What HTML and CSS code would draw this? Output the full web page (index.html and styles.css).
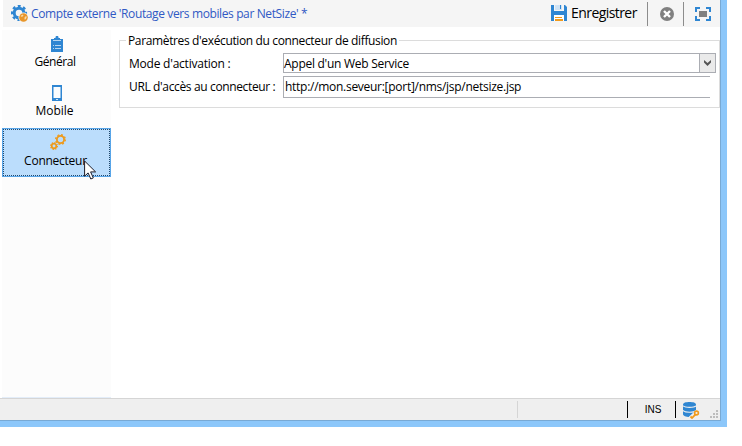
FILE: index.html
```html
<!DOCTYPE html>
<html lang="fr">
<head>
<meta charset="utf-8">
<title>Compte externe</title>
<link rel="stylesheet" href="styles.css">
</head>
<body>
<div class="window">
  <header class="toolbar">
    <svg class="gear" width="18" height="18" viewBox="0 0 18 18">
      <circle cx="8" cy="8" r="4.8" fill="none" stroke="#2f86d2" stroke-width="3"/>
      <circle cx="8" cy="8" r="6.8" fill="none" stroke="#2f86d2" stroke-width="2.6" stroke-dasharray="2.8 2.54" stroke-dashoffset="1.4"/>
      <circle cx="12.5" cy="12.5" r="5" fill="#f5f5f5"/>
      <circle cx="12.5" cy="12.5" r="4.3" fill="#e8962a"/>
      <path d="M9.500 11l2-1.500 1 1-1.500 1.500zM13.500 12.500l1.500-1.500.8 1-1 2.200-1.300.3z" fill="#f8d9a8"/>
    </svg>
    <h1 class="title">Compte externe 'Routage vers mobiles par NetSize' *</h1>
    <button class="save">
      <svg width="16" height="16" viewBox="0 0 16 16">
        <path d="M0 0h3v6h10V0h1l2 2v14h-3v-5H3v5H0z" fill="#2f86d2"/>
        <path d="M4 0h7v5H4z" fill="#cfe3f5"/><path d="M9 0h1v4H9z" fill="#2f86d2"/>
        <path d="M3 10h10v6H3z" fill="#fff"/>
        <path d="M4 12h7v1H4zM4 14h8v2H4z" fill="#f09a1c"/>
      </svg>
      <span>Enregistrer</span>
    </button>
    <button class="tool cancel">
      <svg width="14" height="14" viewBox="0 0 14 14"><circle cx="7" cy="7" r="7" fill="#808080"/><path d="M4 4l6 6M10 4l-6 6" stroke="#fff" stroke-width="2.4"/></svg>
    </button>
    <button class="tool expand">
      <svg width="16" height="14" viewBox="0 0 16 14"><path d="M1 5V1h4M11 1h4v4M15 9v4h-4M5 13H1V9" fill="none" stroke="#2f86d2" stroke-width="2"/><path d="M4 4h8v6H4z" fill="#808080"/></svg>
    </button>
  </header>
  <main class="body">
    <nav class="side">
      <a class="tab">
        <svg width="12" height="16" viewBox="0 0 12 16"><path d="M0 3h12v13H0zM3 2h1.5V1L5 0h2l.5 1v1H9v1H3z" fill="#2f86d2"/><path d="M2 4.500h8" stroke="#b9d6ef"/><path d="M2 9.500h1M4 9.500h6M2 12.500h1M4 12.500h6" stroke="#b9d6ef"/></svg>
        <span class="t-general">Général</span>
      </a>
      <a class="tab">
        <svg width="10" height="16" viewBox="0 0 10 16"><path d="M0 0h10v16H0z" fill="#2f86d2"/><path d="M1.500 2h7v11h-7z" fill="#fafcfe"/><path d="M4 14h2v1H4z" fill="#d5e6f6"/></svg>
        <span class="t-mobile">Mobile</span>
      </a>
      <a class="tab selected">
        <svg class="gears" width="16" height="16" viewBox="0 0 16 16" fill="none" stroke="#ee9a1a">
          <circle cx="10.5" cy="5.5" r="3.6" stroke-width="1.8"/><circle cx="10.5" cy="5.5" r="4.8" stroke-width="1.4" stroke-dasharray="1.9 1.87"/>
          <circle cx="4" cy="12" r="2.3" stroke-width="1.7"/><circle cx="4" cy="12" r="3.4" stroke-width="1.2" stroke-dasharray="1.3 1.37"/>
        </svg>
        <span class="t-connector">Connecteur</span>
        <svg class="cursor" width="13" height="20" viewBox="0 0 13 20"><path d="M.6 1v15.2l3.5-3.3 2.7 6.1 2.5-1.1-2.7-6h5z" fill="#fff" stroke="#1c1c28"/></svg>
      </a>
    </nav>
    <fieldset class="group">
      <legend>Paramètres d'exécution du connecteur de diffusion</legend>
      <div class="row">
        <label class="l-mode">Mode d'activation :</label>
        <div class="combo"><span class="v-mode">Appel d'un Web Service</span>
          <i class="drop"><svg width="7" height="6" viewBox="0 0 7 6"><path d="M0 0l3.5 3L7 0v2.5L3.5 6 0 2.5z" fill="#555"/></svg></i>
        </div>
      </div>
      <div class="row">
        <label class="l-url">URL d'accès au connecteur :</label>
        <div class="field"><span class="v-url">http://mon.seveur:[port]/nms/jsp/netsize.jsp</span></div>
      </div>
    </fieldset>
  </main>
  <footer class="status">
    <span class="pane message"></span>
    <span class="pane blank"></span>
    <span class="pane ins">INS</span>
    <span class="pane db">
      <svg width="17" height="17" viewBox="0 0 17 17">
        <path d="M0 2.500C0 .8 3 0 6.500 0S13 .8 13 2.500V12c0 2-3 3-6.500 3S0 14 0 12z" fill="#2f86d2"/>
        <path d="M0 3.800c2 2 11 2 13 0M0 8.500c2 2.300 11 2.300 13 0" fill="none" stroke="#efefef" stroke-width="1.200"/>
        <path d="M6.500 16.500l6-5.500h4" stroke="#efefef" stroke-width="3.500" fill="none"/>
        <path d="M7.500 14.500l1.500 1.500L12.500 12.300" stroke="#f09a1c" stroke-width="1.800" fill="none"/><circle cx="13.500" cy="11" r="1.900" fill="none" stroke="#f09a1c" stroke-width="1.600"/>
      </svg>
    </span>
    <svg class="grip" width="8" height="8" viewBox="0 0 8 8"><path d="M6 0h2v2H6zM3 3h2v2H3zM6 3h2v2H6zM0 6h2v2H0zM3 6h2v2H3zM6 6h2v2H6z" fill="#bdbdbd"/></svg>
  </footer>
</div>
</body>
</html>
```
FILE: styles.css
```css
* { box-sizing: border-box; }
body { margin: 0; background: #fff; overflow: hidden; font: 12px/16px "Open Sans", "Noto Sans", sans-serif; color: #000; }
.window {
  width: 727px; height: 427px; display: flex; flex-direction: column;
  background: #fff; border: solid #8cc7fa; border-width: 0 6px 6px 0;
  box-shadow: inset -1px -1px #78a9d4; padding: 0 1px 1px 0;
}
svg { display: block; flex: none; }
button { border: 0; background: none; padding: 0; font: inherit; color: inherit; }
.toolbar { height: 27px; margin-left: 3px; padding-right: 1px; background: #f5f5f5; display: flex; align-items: center; flex: none; white-space: nowrap; }
.gear { margin-left: 8px; }
.title { margin: 0 auto 0 2px; font-size: 12px; font-weight: 400; color: #3059c4; letter-spacing: -.38px; }
.save { display: flex; align-items: center; gap: 4px; font-size: 14px; letter-spacing: -.57px; width: 96px; height: 25px; margin-bottom: 1px; }
.tool { height: 24px; width: 36px; border-left: 1px solid #8c8c8c; display: flex; align-items: center; justify-content: center; }
.cancel { padding-left: 2px; }
.expand { padding-left: 3px; }
.body { flex: 1; display: flex; padding-left: 2px; min-height: 0; }
.side { width: 109px; margin-top: 3px; background: #fcfcfc; border-bottom: 1px solid #e3edf9; flex: none; }
.tab { height: 49px; display: flex; flex-direction: column; align-items: center; padding-top: 6px; position: relative; }
.tab span { line-height: 18px; margin-top: 1px; margin-right: 5px; }
.tab .t-general { letter-spacing: -.45px; margin-right: 3px; }
.tab .t-mobile { letter-spacing: 0; margin-right: 4px; }
.tab .t-connector { letter-spacing: -.25px; margin: 2px 2px 0 0; }
.gears { margin-left: 2px; }
.tab.selected { background: #bbddfc; border: 1px solid #58a5e8; outline: 1px dotted #20486c; outline-offset: -2px; padding-top: 5px; }
.cursor { position: absolute; left: 81px; top: 31px; }
.group { margin: 6px 0 0 8px; width: 601px; height: 75px; border: 1px solid #dcdcdc; padding: 0 0 0 9px; min-width: 0; white-space: nowrap; }
legend { padding: 0 2px; margin-left: -3px; line-height: 15px; height: 15px; letter-spacing: -.36px; }
.row { display: flex; align-items: center; }
.row label { width: 154px; flex: none; }
.l-mode { padding-top: 6px; letter-spacing: -.22px; }
.l-url { padding-top: 2px; letter-spacing: -.36px; }
.combo { width: 433px; height: 20px; margin-top: 5px; border: 1px solid #abadb3; display: flex; align-items: center; justify-content: space-between; }
.v-mode { letter-spacing: -.27px; padding-top: 1px; }
.v-url { letter-spacing: -.28px; }
.drop { width: 16px; height: 18px; border-left: 1px solid #abadb3; background: #eaeaea; display: flex; align-items: center; justify-content: center; }
.field { width: 427px; height: 22px; margin-top: 3px; border: 1px solid #abadb3; border-right: 0; padding: 2px 0 0 1px; }
.status { height: 22px; background: #efefef; border-top: 1px solid #d5d5d5; display: flex; align-items: center; flex: none; }
.pane { height: 17px; display: flex; align-items: center; }
.message { width: 518px; border-right: 1px solid #d5d5d5; }
.blank { width: 110px; border-right: 1px solid #000; }
.ins { width: 48px; border-right: 1px solid #000; justify-content: center; padding-left: 3px; font: 10px/16px "Liberation Sans", sans-serif; }
.db { padding: 2px 0 0 7px; }
.grip { margin: 8px 2px 0 auto; }
```
